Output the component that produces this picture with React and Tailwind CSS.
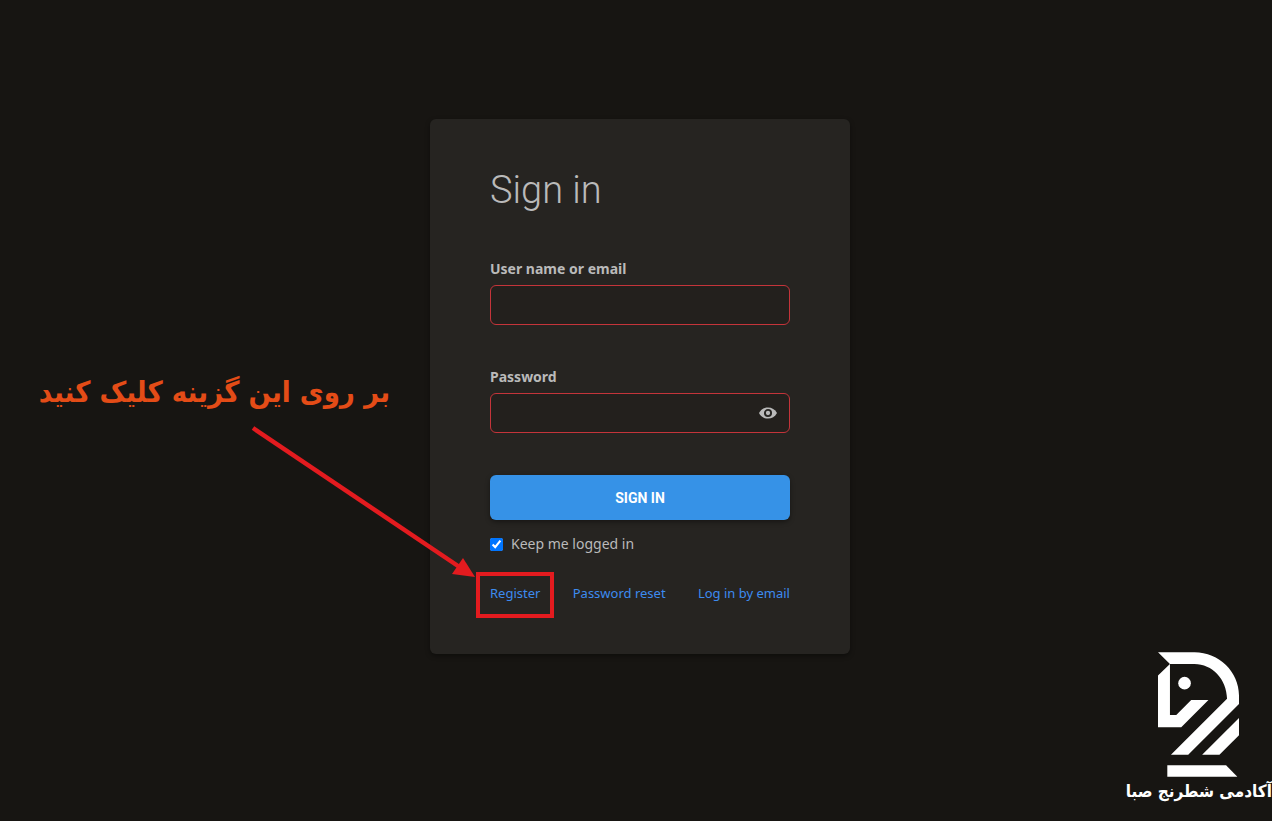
import React, { useState } from 'react';

const links = [
  { label: 'Register', highlighted: true },
  { label: 'Password reset' },
  { label: 'Log in by email' },
];

function EyeIcon() {
  return (
    <svg viewBox="0 0 18 12" className="w-[18px] h-3" fill="none">
      <path d="M0 6C2 2.200 5.200 .4 9 .4S16 2.200 18 6C16 9.800 12.800 11.600 9 11.600S2 9.800 0 6Z" fill="#bababa" />
      <circle cx="9" cy="6" r="3.100" stroke="#262421" strokeWidth="1.900" />
    </svg>
  );
}

function KnightLogo() {
  return (
    <svg viewBox="137 36 244 375" className="w-[81px] h-[125px]" fill="#ffffff">
      <path d="M137 36H247C321 36 381 95 381 166V192L228 345H176L345 176C344 116 300 71 247 71H173Z" />
      <path d="M137 106L173 71V225H192L237 180H289L207 262H137Z" />
      <path d="M381 234V286L322 345H270Z" />
      <path d="M165 376H342L376 411H165Z" />
      <circle cx="217" cy="129" r="19" />
    </svg>
  );
}

function Arrow() {
  return (
    <svg viewBox="0 0 226 154" className="absolute -left-[180px] top-[306px] w-[226px] h-[154px] pointer-events-none">
      <path d="M3 3L211 143" stroke="#e31b1f" strokeWidth="4.500" />
      <path d="M225 152L213 133L202 149Z" fill="#e31b1f" />
    </svg>
  );
}

function Field({ id, label, type, value, onChange, children }) {
  return (
    <div className="mb-[42px]">
      <label htmlFor={id} className="block text-sm leading-5 font-bold mb-1.5">{label}</label>
      <div className="flex items-center h-10 rounded-md border border-[#c4343a] bg-[#23201d]">
        <input
          id={id}
          type={type}
          value={value}
          onChange={(e) => onChange(e.target.value)}
          className="flex-1 min-w-0 h-full px-3 bg-transparent focus:outline-none"
        />
        {children}
      </div>
    </div>
  );
}

export default function App() {
  const [username, setUsername] = useState('');
  const [password, setPassword] = useState('');
  const [showPassword, setShowPassword] = useState(false);
  const [remember, setRemember] = useState(true);

  return (
    <main className="relative min-h-screen overflow-hidden bg-[#171512] pt-[119px] pb-40 pl-2 font-['Noto_Sans','DejaVu_Sans',sans-serif] text-sm text-[#bababa]">
      <div className="relative mx-auto w-full max-w-[420px]">
        <form
          onSubmit={(e) => e.preventDefault()}
          className="rounded-md bg-[#262421] px-[60px] pt-[47px] pb-[51px] shadow-[0_2px_5px_rgba(0,0,0,0.4)]"
        >
          <h1 className="font-[Roboto,sans-serif] font-light text-[38px] leading-[48px] mb-[45px]">Sign in</h1>

          <Field id="username" label="User name or email" type="text" value={username} onChange={setUsername} />
          <Field id="password" label="Password" type={showPassword ? 'text' : 'password'} value={password} onChange={setPassword}>
            <button type="button" aria-label="Show password" onClick={() => setShowPassword(s => !s)} className="px-3">
              <EyeIcon />
            </button>
          </Field>

          <button type="submit" className="block w-full h-[45px] rounded-md bg-[#3692e7] text-white font-[Roboto,sans-serif] font-bold text-sm shadow-[0_2px_5px_rgba(0,0,0,0.4)]">
            SIGN IN
          </button>

          <div className="flex items-center gap-2 mt-3.5">
            <input id="remember" type="checkbox" checked={remember} onChange={(e) => setRemember(e.target.checked)} className="w-[13px] h-[13px]" />
            <label htmlFor="remember" className="leading-5">Keep me logged in</label>
          </div>

          <nav className="flex justify-between mt-[29px] text-[13px] leading-5 text-[#3d8bef]">
            {links.map(link => (
              <a key={link.label} href="#" className="relative">
                {link.label}
                {link.highlighted && (
                  <span className="absolute -inset-x-3.5 -top-[11px] h-[46px] border-4 border-[#e31b1f] pointer-events-none" />
                )}
              </a>
            ))}
          </nav>
        </form>

        <p dir="rtl" className="absolute right-[460px] top-[249px] whitespace-nowrap font-['DejaVu_Sans_Condensed','DejaVu_Sans',sans-serif] font-bold text-[29px] leading-[48px] text-[#e44c17]">
          بر روی این گزینه کلیک کنید
        </p>
        <Arrow />
      </div>

      <div className="absolute right-0 bottom-4 flex flex-col items-center text-white">
        <KnightLogo />
        <p dir="rtl" className="font-['DejaVu_Sans_Condensed','DejaVu_Sans',sans-serif] font-bold text-[17px] leading-7 whitespace-nowrap">آکادمی شطرنج صبا</p>
      </div>
    </main>
  );
}
